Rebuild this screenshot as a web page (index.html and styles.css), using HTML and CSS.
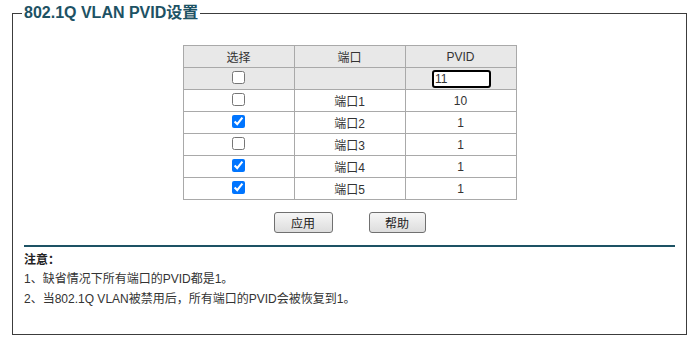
FILE: index.html
```html
<!DOCTYPE html>
<html>
<head>
<meta charset="utf-8">
<link rel="stylesheet" href="styles.css">
</head>
<body>
<fieldset class="panel">
  <legend class="panel-title">802.1Q VLAN PVID设置</legend>
  <table class="pvid-table">
    <tr class="head">
      <th>选择</th><th>端口</th><th>PVID</th>
    </tr>
    <tr class="head">
      <td><input type="checkbox" class="cb"></td>
      <td></td>
      <td><input type="text" class="pvid-input" value="11"></td>
    </tr>
    <tr><td><input type="checkbox" class="cb"></td><td>端口1</td><td>10</td></tr>
    <tr><td><input type="checkbox" class="cb" checked></td><td>端口2</td><td>1</td></tr>
    <tr><td><input type="checkbox" class="cb"></td><td>端口3</td><td>1</td></tr>
    <tr><td><input type="checkbox" class="cb" checked></td><td>端口4</td><td>1</td></tr>
    <tr><td><input type="checkbox" class="cb" checked></td><td>端口5</td><td>1</td></tr>
  </table>
  <div class="actions">
    <button class="btn btn-apply">应用</button>
    <button class="btn btn-help">帮助</button>
  </div>
  <div class="notes">
    <div class="notes-title">注意：</div>
    <div class="note">1、缺省情况下所有端口的PVID都是1。</div>
    <div class="note">2、当802.1Q VLAN被禁用后，所有端口的PVID会被恢复到1。</div>
  </div>
</fieldset>
</body>
</html>
```
FILE: styles.css
```css
html, body {
  margin: 0;
  padding: 0;
  background: #fff;
}
body {
  font-family: "Liberation Sans", Arial, "Noto Sans CJK SC", sans-serif;
  font-size: 12px;
  color: #333;
}
.panel {
  margin: 4px 5px 0 12px;
  padding: 0;
  border: 1px solid #3c3c3c;
  height: 331px;
  box-sizing: border-box;
  min-width: 0;
}
.panel-title {
  margin-left: 9px;
  padding: 0 2px;
  font-size: 16px;
  line-height: 18px;
  font-weight: bold;
  color: #1d5264;
}
.pvid-table {
  margin: 23px auto 0;
  border-collapse: collapse;
  width: 334px;
  table-layout: fixed;
}
.pvid-table th,
.pvid-table td {
  border: 1px solid #a9a9a9;
  height: 21px;
  padding: 0;
  text-align: center;
  font-weight: normal;
  vertical-align: middle;
}
.pvid-table tr.head th,
.pvid-table tr.head td {
  background: #e8e8e8;
}
.cb {
  margin: 0 0 2px;
  width: 13px;
  height: 13px;
  vertical-align: middle;
}
.pvid-input {
  box-sizing: border-box;
  width: 59px;
  height: 18px;
  border: 2px solid #000;
  border-radius: 3px;
  padding: 0 0 0 1px;
  font-family: "Liberation Sans", Arial, sans-serif;
  font-size: 12px;
  color: #333;
  outline: none;
  margin-left: 2px;
  vertical-align: middle;
}
.actions {
  display: flex;
  justify-content: center;
  gap: 36px;
  margin-top: 12px;
}
.btn {
  box-sizing: border-box;
  height: 21px;
  padding: 0;
  border: 1px solid #707070;
  border-radius: 3px;
  background: linear-gradient(#f6f6f6, #dddddd);
  font-family: "Liberation Sans", Arial, "Noto Sans CJK SC", sans-serif;
  font-size: 12px;
  color: #222;
}
.btn-apply { width: 59px; }
.btn-help { width: 57px; }
.notes {
  margin: 12px 11px 0;
  border-top: 2px solid #1d5264;
  padding-top: 4px;
}
.notes-title {
  font-weight: bold;
  line-height: 18px;
  color: #222;
}
.note {
  line-height: 20px;
}
```
